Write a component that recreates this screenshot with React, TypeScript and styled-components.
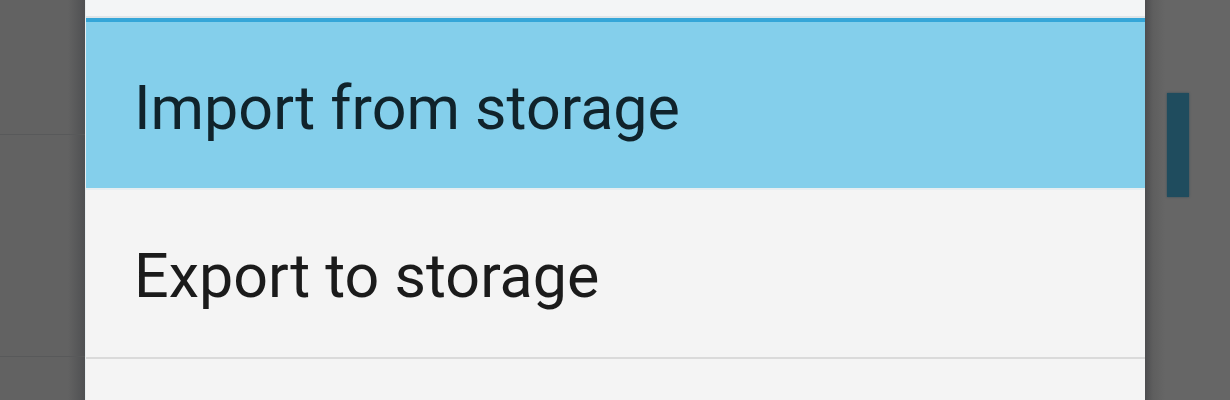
import styled, { createGlobalStyle } from 'styled-components';

const GlobalStyle = createGlobalStyle`
  html, body {
    margin: 0;
    padding: 0;
    background: #646464;
  }
  #root {
    height: 400px;
    overflow: hidden;
  }
`;

const items = [
  { label: 'Import from storage', selected: true },
  { label: 'Export to storage', selected: false },
];

export default function App() {
  return (
    <>
      <GlobalStyle />
      <Screen>
        <LeftGutter>
          <GutterRow height={135} />
          <GutterRow height={222} />
        </LeftGutter>
        <Dialog>
          <TopRow />
          {items.map((item) => (
            <Item key={item.label} selected={item.selected}>
              {item.label}
            </Item>
          ))}
          <Item selected={false} />
        </Dialog>
        <RightGutter>
          <ScrollThumb />
        </RightGutter>
      </Screen>
    </>
  );
}

const Screen = styled('div')`
  display: flex;
  width: 1230px;
  height: 400px;
  overflow: hidden;
  font-family: Roboto, 'Noto Sans', sans-serif;
`;

const LeftGutter = styled('div')`
  width: 85px;
  flex-shrink: 0;
  display: flex;
  flex-direction: column;
  background: linear-gradient(to right, #626262 0%, #626262 80%, #4f5052 100%);
`;

const GutterRow = styled('div')<{ height: number }>`
  height: ${({ height }) => height - 1}px;
  border-bottom: 1px solid #58595a;
`;

const Dialog = styled('div')`
  width: 1060px;
  flex-shrink: 0;
  display: flex;
  flex-direction: column;
  background: #f4f4f4;
  border-left: 1px solid #e9eef0;
  box-sizing: border-box;
`;

const TopRow = styled('div')`
  height: 16px;
  flex-shrink: 0;
  background: #f3f5f6;
  border-bottom: 2px solid #dfe5e8;
`;

const Item = styled('div')<{ selected: boolean }>`
  height: ${({ selected }) => (selected ? 172 : 169)}px;
  flex-shrink: 0;
  display: flex;
  align-items: center;
  padding-left: 48px;
  padding-top: 5px;
  box-sizing: border-box;
  font-size: 61px;
  color: ${({ selected }) => (selected ? '#10232b' : '#1b1b1b')};
  background: ${({ selected }) => (selected ? '#84cfeb' : '#f4f4f4')};
  border-top: ${({ selected }) => (selected ? '4px solid #35a6d8' : 'none')};
  border-bottom: 2px solid ${({ selected }) => (selected ? '#e6eef1' : '#dadada')};
`;

const RightGutter = styled('div')`
  flex: 1;
  padding: 93px 0 0 22px;
  background: linear-gradient(to right, #4d4d4f 0px, #5e5e5e 8px, #666666 20px, #666666 100%);
`;

const ScrollThumb = styled('div')`
  width: 22px;
  height: 104px;
  background: #1f4c5e;
  box-shadow: 0 0 2px rgba(20, 60, 80, 0.6);
`;
